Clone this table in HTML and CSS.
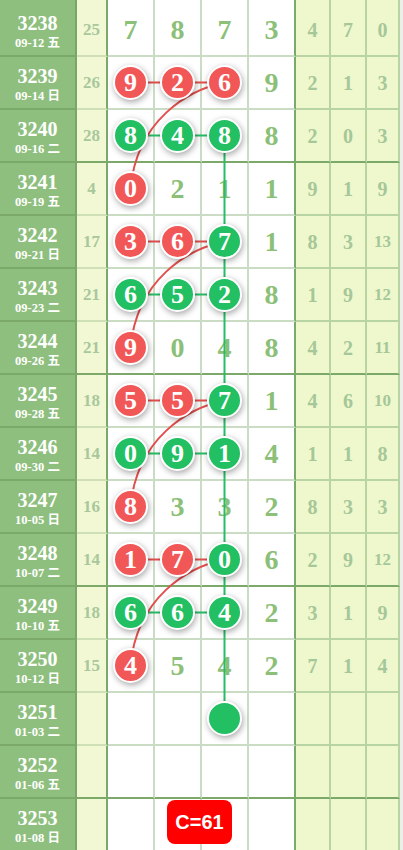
FILE: index.html
```html
<!DOCTYPE html>
<html lang="zh">
<head>
<meta charset="utf-8">
<title>走势图</title>
<link rel="stylesheet" href="styles.css">
</head>
<body>
<div class="chart">
  <div class="row stub sep">
    <div class="cell date"></div><div class="cell gap"></div>
    <div class="cell num"></div><div class="cell num"></div><div class="cell num"></div><div class="cell num last"></div>
    <div class="cell rt"></div><div class="cell rt"></div><div class="cell rt"></div>
  </div>

  <div class="row">
    <div class="cell date"><span class="pd">3238</span><span class="dt">09-12 五</span></div>
    <div class="cell gap">25</div>
    <div class="cell num">7</div><div class="cell num">8</div><div class="cell num">7</div><div class="cell num last">3</div>
    <div class="cell rt">4</div><div class="cell rt">7</div><div class="cell rt">0</div>
  </div>
  <div class="row">
    <div class="cell date"><span class="pd">3239</span><span class="dt">09-14 日</span></div>
    <div class="cell gap">26</div>
    <div class="cell num"><span class="ball r">9</span></div><div class="cell num"><span class="ball r">2</span></div><div class="cell num"><span class="ball r">6</span></div><div class="cell num last">9</div>
    <div class="cell rt">2</div><div class="cell rt">1</div><div class="cell rt">3</div>
  </div>
  <div class="row sep">
    <div class="cell date"><span class="pd">3240</span><span class="dt">09-16 二</span></div>
    <div class="cell gap">28</div>
    <div class="cell num"><span class="ball g">8</span></div><div class="cell num"><span class="ball g">4</span></div><div class="cell num"><span class="ball g">8</span></div><div class="cell num last">8</div>
    <div class="cell rt">2</div><div class="cell rt">0</div><div class="cell rt">3</div>
  </div>

  <div class="row">
    <div class="cell date"><span class="pd">3241</span><span class="dt">09-19 五</span></div>
    <div class="cell gap">4</div>
    <div class="cell num"><span class="ball r">0</span></div><div class="cell num">2</div><div class="cell num">1</div><div class="cell num last">1</div>
    <div class="cell rt">9</div><div class="cell rt">1</div><div class="cell rt">9</div>
  </div>
  <div class="row">
    <div class="cell date"><span class="pd">3242</span><span class="dt">09-21 日</span></div>
    <div class="cell gap">17</div>
    <div class="cell num"><span class="ball r">3</span></div><div class="cell num"><span class="ball r">6</span></div><div class="cell num"><span class="ball g">7</span></div><div class="cell num last">1</div>
    <div class="cell rt">8</div><div class="cell rt">3</div><div class="cell rt two">13</div>
  </div>
  <div class="row">
    <div class="cell date"><span class="pd">3243</span><span class="dt">09-23 二</span></div>
    <div class="cell gap">21</div>
    <div class="cell num"><span class="ball g">6</span></div><div class="cell num"><span class="ball g">5</span></div><div class="cell num"><span class="ball g">2</span></div><div class="cell num last">8</div>
    <div class="cell rt">1</div><div class="cell rt">9</div><div class="cell rt two">12</div>
  </div>
  <div class="row sep">
    <div class="cell date"><span class="pd">3244</span><span class="dt">09-26 五</span></div>
    <div class="cell gap">21</div>
    <div class="cell num"><span class="ball r">9</span></div><div class="cell num">0</div><div class="cell num">4</div><div class="cell num last">8</div>
    <div class="cell rt">4</div><div class="cell rt">2</div><div class="cell rt two">11</div>
  </div>

  <div class="row">
    <div class="cell date"><span class="pd">3245</span><span class="dt">09-28 五</span></div>
    <div class="cell gap">18</div>
    <div class="cell num"><span class="ball r">5</span></div><div class="cell num"><span class="ball r">5</span></div><div class="cell num"><span class="ball g">7</span></div><div class="cell num last">1</div>
    <div class="cell rt">4</div><div class="cell rt">6</div><div class="cell rt two">10</div>
  </div>
  <div class="row">
    <div class="cell date"><span class="pd">3246</span><span class="dt">09-30 二</span></div>
    <div class="cell gap">14</div>
    <div class="cell num"><span class="ball g">0</span></div><div class="cell num"><span class="ball g">9</span></div><div class="cell num"><span class="ball g">1</span></div><div class="cell num last">4</div>
    <div class="cell rt">1</div><div class="cell rt">1</div><div class="cell rt">8</div>
  </div>
  <div class="row">
    <div class="cell date"><span class="pd">3247</span><span class="dt">10-05 日</span></div>
    <div class="cell gap">16</div>
    <div class="cell num"><span class="ball r">8</span></div><div class="cell num">3</div><div class="cell num">3</div><div class="cell num last">2</div>
    <div class="cell rt">8</div><div class="cell rt">3</div><div class="cell rt">3</div>
  </div>
  <div class="row sep">
    <div class="cell date"><span class="pd">3248</span><span class="dt">10-07 二</span></div>
    <div class="cell gap">14</div>
    <div class="cell num"><span class="ball r">1</span></div><div class="cell num"><span class="ball r">7</span></div><div class="cell num"><span class="ball g">0</span></div><div class="cell num last">6</div>
    <div class="cell rt">2</div><div class="cell rt">9</div><div class="cell rt two">12</div>
  </div>

  <div class="row">
    <div class="cell date"><span class="pd">3249</span><span class="dt">10-10 五</span></div>
    <div class="cell gap">18</div>
    <div class="cell num"><span class="ball g">6</span></div><div class="cell num"><span class="ball g">6</span></div><div class="cell num"><span class="ball g">4</span></div><div class="cell num last">2</div>
    <div class="cell rt">3</div><div class="cell rt">1</div><div class="cell rt">9</div>
  </div>
  <div class="row">
    <div class="cell date"><span class="pd">3250</span><span class="dt">10-12 日</span></div>
    <div class="cell gap">15</div>
    <div class="cell num"><span class="ball r">4</span></div><div class="cell num">5</div><div class="cell num">4</div><div class="cell num last">2</div>
    <div class="cell rt">7</div><div class="cell rt">1</div><div class="cell rt">4</div>
  </div>
  <div class="row">
    <div class="cell date"><span class="pd">3251</span><span class="dt">01-03 二</span></div>
    <div class="cell gap"></div>
    <div class="cell num"></div><div class="cell num"></div><div class="cell num"><span class="ball g"></span></div><div class="cell num last"></div>
    <div class="cell rt"></div><div class="cell rt"></div><div class="cell rt"></div>
  </div>
  <div class="row sep">
    <div class="cell date"><span class="pd">3252</span><span class="dt">01-06 五</span></div>
    <div class="cell gap"></div>
    <div class="cell num"></div><div class="cell num"></div><div class="cell num"></div><div class="cell num last"></div>
    <div class="cell rt"></div><div class="cell rt"></div><div class="cell rt"></div>
  </div>
  <div class="row final">
    <div class="cell date"><span class="pd">3253</span><span class="dt">01-08 日</span></div>
    <div class="cell gap"></div>
    <div class="cell num"></div><div class="cell num"></div><div class="cell num"></div><div class="cell num last"></div>
    <div class="cell rt"></div><div class="cell rt"></div><div class="cell rt"></div>
    <div class="badge">C=61</div>
  </div>

  <svg class="lines" width="400" height="852" viewBox="0 0 400 852">
    <g class="ln-green">
      <line x1="224.5" y1="135.5" x2="224.5" y2="718.5"/>
      <line x1="130.5" y1="135.5" x2="224.5" y2="135.5"/>
      <line x1="130.5" y1="294.5" x2="224.5" y2="294.5"/>
      <line x1="130.5" y1="453.5" x2="224.5" y2="453.5"/>
      <line x1="130.5" y1="612.5" x2="224.5" y2="612.5"/>
    </g>
    <g class="ln-red">
      <line x1="130.5" y1="82.5" x2="224.5" y2="82.5"/>
      <line x1="130.5" y1="241.5" x2="224.5" y2="241.5"/>
      <line x1="130.5" y1="400.5" x2="224.5" y2="400.5"/>
      <line x1="130.5" y1="559.5" x2="224.5" y2="559.5"/>
      <path d="M224.5 82.5 C188 90 137 120 130.5 188.5"/>
      <path d="M224.5 241.5 C188 249 137 279 130.5 347.5"/>
      <path d="M224.5 400.5 C188 408 137 438 130.5 506.5"/>
      <path d="M224.5 559.5 C188 567 137 597 130.5 665.5"/>
    </g>
  </svg>
</div>
</body>
</html>
```

FILE: styles.css
```css
* {
  box-sizing: border-box;
}

html,
body {
  margin: 0;
  padding: 0;
  overflow: hidden;
  background: #eceeea;
}

body {
  font-family: "Liberation Serif", "Noto Sans CJK SC", serif;
}

.chart {
  position: relative;
  width: 400px;
}

.row {
  display: grid;
  grid-template-columns: 77px 31px 47px 47px 47px 47px 35px 36px 33px;
  height: 53px;
}

.row.stub {
  height: 4px;
}

.row.final {
  position: relative;
}

.cell {
  display: flex;
  align-items: center;
  justify-content: center;
  border-right: 2px solid #cadcc4;
  border-bottom: 2px solid #cadcc4;
  font-weight: bold;
  line-height: 1;
}

.date {
  background: #8fbf7e;
  border-right-color: #79a767;
  border-bottom-color: #7ba969;
  flex-direction: column;
  justify-content: flex-start;
  padding-top: 9px;
  color: #ffffff;
}

.pd {
  font-size: 20px;
  line-height: 20px;
}

.dt {
  margin-top: 3px;
  font-size: 12.5px;
  line-height: 14px;
  white-space: nowrap;
}

.gap {
  background: #f1f8d3;
  border-right-color: #7ba969;
  border-bottom-color: #cfdfb6;
  color: #a9c79c;
  font-size: 17px;
}

.num {
  background: #ffffff;
  color: #8cbf78;
  font-size: 28px;
}

.num.last {
  border-right-color: #7ba969;
}

.rt {
  background: #eff8cc;
  border-right-color: #b9d4a3;
  border-bottom-color: #b9d4a3;
  color: #a5c799;
  font-size: 20px;
}

.rt.two {
  font-size: 17px;
}

.row.sep .cell {
  border-bottom-color: #7ba969;
}

.ball {
  position: relative;
  z-index: 2;
  display: flex;
  align-items: center;
  justify-content: center;
  width: 35px;
  height: 35px;
  border: 2px solid #ffffff;
  border-radius: 50%;
  color: #ffffff;
  font-size: 26px;
  line-height: 1;
  box-shadow: 1px 2px 6px rgba(0, 0, 0, 0.35);
}

.ball.r {
  background: #f25757;
}

.ball.g {
  background: #22bf63;
}

.lines {
  position: absolute;
  top: 0;
  left: 0;
  z-index: 1;
  pointer-events: none;
}

.ln-green line {
  stroke: #27bd66;
  stroke-width: 2;
}

.ln-red line,
.ln-red path {
  stroke: #e44e4e;
  stroke-width: 2;
  fill: none;
}

.badge {
  position: absolute;
  z-index: 3;
  left: 167px;
  top: 1px;
  width: 65px;
  height: 44px;
  display: flex;
  align-items: center;
  justify-content: center;
  background: #ff0000;
  border-radius: 8px;
  color: #ffffff;
  font-family: "Liberation Sans", Arial, sans-serif;
  font-weight: bold;
  font-size: 20px;
}
```
